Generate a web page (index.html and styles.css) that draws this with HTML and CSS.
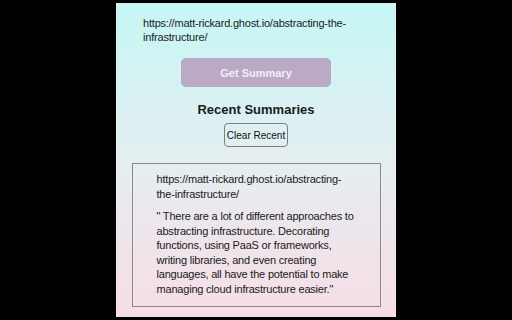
FILE: index.html
```html
<!DOCTYPE html>
<html lang="en">
<head>
  <meta charset="UTF-8">
  <title>Summarizer</title>
  <link rel="stylesheet" href="styles.css">
</head>
<body>
  <div class="popup">
    <p class="current-url">https://matt-rickard.ghost.io/abstracting-the-infrastructure/</p>
    <button class="get-summary">Get Summary</button>
    <h2>Recent Summaries</h2>
    <button class="clear-recent">Clear Recent</button>
    <div class="summary">
      <p class="summary-url">https://matt-rickard.ghost.io/abstracting-the-infrastructure/</p>
      <p class="summary-text">" There are a lot of different approaches to abstracting infrastructure. Decorating functions, using PaaS or frameworks, writing libraries, and even creating languages, all have the potential to make managing cloud infrastructure easier."</p>
    </div>
  </div>
</body>
</html>
```

FILE: styles.css
```css
html, body {
  margin: 0;
  height: 100%;
  background: #000;
}
body {
  display: flex;
  justify-content: center;
  padding-top: 3px;
  box-sizing: border-box;
  font-family: "Liberation Sans", Arial, sans-serif;
  color: #1a1a1a;
}
.popup {
  width: 280px;
  height: 314px;
  box-sizing: border-box;
  padding: 13px 27px 0;
  display: flex;
  flex-direction: column;
  align-items: center;
  background: linear-gradient(180deg, #c5f7f5 0%, #e5eef1 50%, #f7dde6 100%);
}
.popup > * {
  flex-shrink: 0;
}
.current-url {
  align-self: stretch;
  margin: 0;
  font-size: 11px;
  line-height: 14px;
  letter-spacing: -0.2px;
}
.get-summary {
  margin-top: 14px;
  width: 150px;
  height: 29px;
  border: none;
  border-radius: 5px;
  background: #bbaac6;
  color: #f4eef6;
  font-family: inherit;
  font-size: 11px;
  font-weight: 700;
}
h2 {
  margin: 14px 0 4px;
  font-size: 13px;
  line-height: 18px;
  font-weight: 700;
}
.clear-recent {
  width: 64px;
  height: 24px;
  padding: 0;
  border: 1px solid #808080;
  border-radius: 4px;
  background: transparent;
  font-family: inherit;
  font-size: 10px;
  color: #111;
}
.summary {
  margin-top: 16px;
  width: 249px;
  box-sizing: border-box;
  padding: 8px 24px 10px;
  border: 1px solid #8a8a8a;
}
.summary p {
  margin: 0;
  font-size: 11px;
  line-height: 14.5px;
  letter-spacing: -0.2px;
}
.summary-text {
  margin-top: 8px !important;
}
```
